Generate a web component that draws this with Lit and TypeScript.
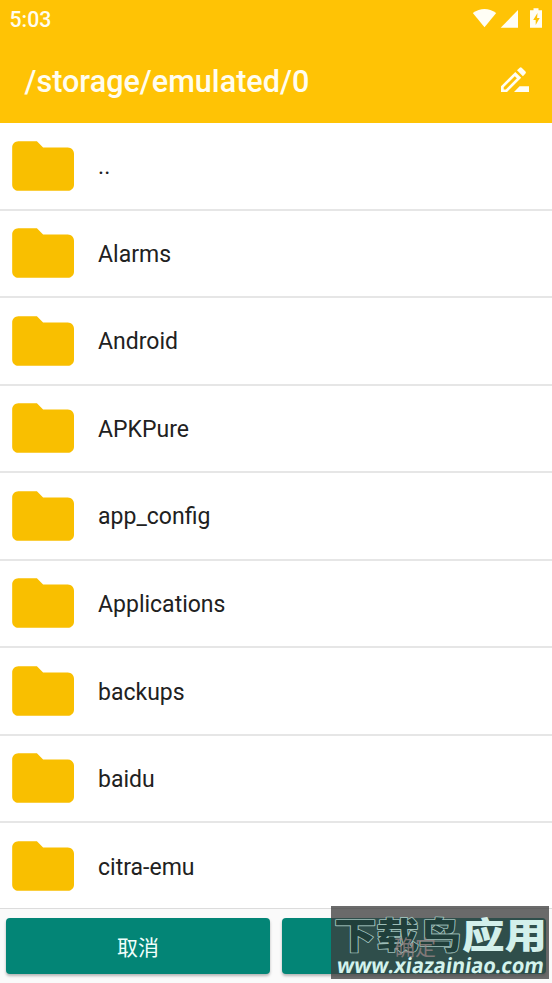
import { LitElement, html, css } from "lit";
import { customElement, property } from "lit/decorators.js";

@customElement("folder-row")
class FolderRow extends LitElement {
  @property() name = "";
  static styles = css`
    :host { display: flex; flex: none; box-sizing: border-box; height: 87.54px; align-items: center; padding-left: 5.7px; border-bottom: 2px solid #e6e6e6; background: #fff; }
    svg { width: 74.2px; height: 74.2px; flex: none; fill: #f9bf00; }
    span { margin-left: 18.2px; padding-top: 3.2px; font: 400 23px/32px Roboto, sans-serif; color: #212121; white-space: pre; }
  `;
  render() {
    return html`<svg viewBox="0 0 24 24"><path d="M10 4H4c-1.1 0-2 .9-2 2v12c0 1.1.9 2 2 2h16c1.1 0 2-.9 2-2V8c0-1.1-.9-2-2-2h-8z"/></svg><span>${this.name}</span>`;
  }
}

@customElement("app-root")
class AppRoot extends LitElement {
  folders = ["..", "Alarms", "Android", "APKPure", "app_config", "Applications", "backups", "baidu", "citra-emu"];
  static styles = css`
    :host { display: flex; flex-direction: column; position: relative; height: 983px; overflow: hidden; background: #fafafa; font-family: Roboto, "Noto Sans CJK SC", sans-serif; }
    header { flex: none; height: 123px; background: #ffc305; color: #fffdf0; }
    .status { display: flex; height: 38px; justify-content: space-between; padding-left: 9.5px; }
    .time { font-size: 21.3px; line-height: 39px; font-weight: 500; }
    .tray { width: 87px; height: 38px; fill: #fffef5; }
    .bar { display: flex; height: 84px; align-items: center; justify-content: space-between; padding: 0 18px 0 24.5px; }
    .title { font-size: 30.6px; line-height: 40px; font-weight: 500; padding-top: 4px; }
    .edit { width: 38px; height: 38px; fill: #fffef5; }
    main { height: 785px; flex: none; overflow: hidden; display: flex; flex-direction: column; }
    footer { flex: 1; display: flex; gap: 12px; padding: 9.4px 6px; border-top: 1px solid #dcdcdc; box-sizing: border-box; }
    .btn { flex: 1; display: flex; align-items: center; justify-content: center; border-radius: 4px; background: #038576; color: #f0fffc; box-shadow: 0 2px 3px rgba(0,0,0,.28); font: 400 21px/30px "Noto Sans CJK SC", sans-serif; padding-bottom: 1px; }
    .mark { position: absolute; left: 331px; top: 906px; width: 218px; height: 73px; background: rgba(62,62,62,.766); }
    .mark svg { display: block; width: 218px; height: 73px; }
    .cn { font: 900 42px "Noto Sans CJK SC", sans-serif; }
    .url { font: 700 21px "Open Sans", sans-serif; fill: #d3f3ed; }
    .ok { font: 400 21px "Noto Sans CJK SC", sans-serif; fill: #9b8788; opacity: .75; }
    .dark { fill: #203f3b; stroke: #9dbdb7; stroke-width: 2px; paint-order: stroke; stroke-linejoin: round; }
    .light { fill: #d3f0eb; }
  `;
  render() {
    return html`
      <header>
        <div class="status"><span class="time">5:03</span>
          <svg class="tray" viewBox="465 0 87 38"><path d="M472.8 13Q484.5 5 496.2 13L484.5 27.2z"/><path d="M518 10v17.8h-17.3z"/><path fill-rule="evenodd" d="M533.5 8.3h5v2h3.5v17.5h-12V10.3h3.5zM537.5 13l-4.3 7h2.5v5l4-7h-2.6z"/></svg>
        </div>
        <div class="bar"><span class="title">/storage/emulated/0</span>
          <svg class="edit" viewBox="496 61 38 38"><path fill-rule="evenodd" d="M501 86.2L515.3 71.9L521.2 77.8L507 92H501zM503.7 87.3V89.4H505.8L516.9 78.3L514.8 76.2z"/><path d="M517 70.3L519.7 67.8Q520.7 66.9 521.7 67.8L525.5 71.6Q526.4 72.5 525.5 73.5L522.9 76.2zM514 92L519.6 86.3H529V92z"/></svg>
        </div>
      </header>
      <main>${this.folders.map((f) => html`<folder-row .name=${f}></folder-row>`)}</main>
      <footer><div class="btn">取消</div><div class="btn"></div></footer>
      <div class="mark"><svg viewBox="0 0 218 73">
        <g transform="translate(0 42.5) scale(1 .86)">
          <text class="cn dark" x="3" y="0" textLength="127" lengthAdjust="spacingAndGlyphs">下载鸟</text>
          <text class="cn light" x="131" y="0" textLength="85" lengthAdjust="spacingAndGlyphs">应用</text>
        </g>
        <text class="ok" x="63" y="48.5">确定</text>
        <g transform="translate(5 67) skewX(-9)"><text class="url" x="0" y="0" textLength="207" lengthAdjust="spacingAndGlyphs">www.xiazainiao.com</text></g>
      </svg></div>`;
  }
}
